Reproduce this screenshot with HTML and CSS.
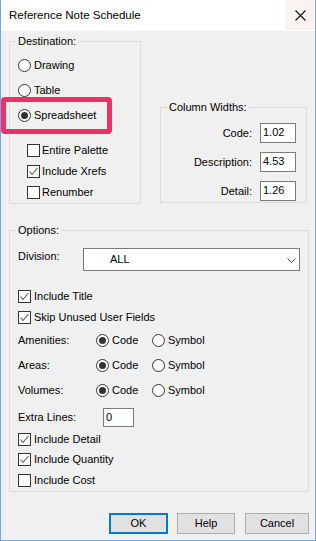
FILE: index.html
```html
<!DOCTYPE html>
<html>
<head>
<meta charset="utf-8">
<title>Reference Note Schedule</title>
<link rel="stylesheet" href="styles.css">
</head>
<body>
<div class="window">
  <div class="titlebar">
    <span class="title">Reference Note Schedule</span>
    <span class="close"><svg width="11" height="11" viewBox="0 0 11 11"><path d="M0.5 0.5 L10.5 10.5 M10.5 0.5 L0.5 10.5" stroke="#111" stroke-width="1.1"/></svg></span>
  </div>
  <div class="client">
    <div class="toprow">
      <fieldset class="group dest">
        <legend>Destination:</legend>
        <div class="radios">
          <div class="opt"><span class="radio"></span>Drawing</div>
          <div class="opt"><span class="radio"></span>Table</div>
          <div class="opt"><span class="radio on"></span>Spreadsheet</div>
        </div>
        <div class="checks">
          <div class="chk"><span class="box"></span>Entire Palette</div>
          <div class="chk"><span class="box on"><svg width="11" height="11" viewBox="0 0 11 11"><path d="M1.5 5.5 L4 8.5 L9.5 2" fill="none" stroke="#555" stroke-width="1.1"/></svg></span>Include Xrefs</div>
          <div class="chk"><span class="box"></span>Renumber</div>
        </div>
      </fieldset>
      <fieldset class="group colw">
        <legend>Column Widths:</legend>
        <div class="cwrow"><span class="cwlabel">Code:</span><span class="field">1.02</span></div>
        <div class="cwrow"><span class="cwlabel">Description:</span><span class="field">4.53</span></div>
        <div class="cwrow"><span class="cwlabel">Detail:</span><span class="field">1.26</span></div>
      </fieldset>
    </div>

    <fieldset class="group options">
      <legend>Options:</legend>
      <div class="division">
        <span class="divlabel">Division:</span>
        <span class="select"><span class="selval">ALL</span><svg class="chev" width="9" height="5" viewBox="0 0 9 5"><path d="M0.5 0.5 L4.5 4.5 L8.5 0.5" fill="none" stroke="#444" stroke-width="1"/></svg></span>
      </div>
      <div class="orow chk2"><span class="box on"><svg width="11" height="11" viewBox="0 0 11 11"><path d="M1.5 5.5 L4 8.5 L9.5 2" fill="none" stroke="#555" stroke-width="1.1"/></svg></span>Include Title</div>
      <div class="orow chk2"><span class="box on"><svg width="11" height="11" viewBox="0 0 11 11"><path d="M1.5 5.5 L4 8.5 L9.5 2" fill="none" stroke="#555" stroke-width="1.1"/></svg></span>Skip Unused User Fields</div>
      <div class="rrow"><span class="rlabel">Amenities:</span><span class="ropt code"><span class="radio on"></span>Code</span><span class="ropt"><span class="radio"></span>Symbol</span></div>
      <div class="rrow"><span class="rlabel">Areas:</span><span class="ropt code"><span class="radio on"></span>Code</span><span class="ropt"><span class="radio"></span>Symbol</span></div>
      <div class="rrow"><span class="rlabel">Volumes:</span><span class="ropt code"><span class="radio on"></span>Code</span><span class="ropt"><span class="radio"></span>Symbol</span></div>
      <div class="extra"><span class="exlabel">Extra Lines:</span><span class="field exfield">0</span></div>
      <div class="orow2 chk2"><span class="box on"><svg width="11" height="11" viewBox="0 0 11 11"><path d="M1.5 5.5 L4 8.5 L9.5 2" fill="none" stroke="#555" stroke-width="1.1"/></svg></span>Include Detail</div>
      <div class="orow2 chk2"><span class="box on"><svg width="11" height="11" viewBox="0 0 11 11"><path d="M1.5 5.5 L4 8.5 L9.5 2" fill="none" stroke="#555" stroke-width="1.1"/></svg></span>Include Quantity</div>
      <div class="orow2 chk2"><span class="box"></span>Include Cost</div>
    </fieldset>

    <div class="buttons">
      <span class="btn default">OK</span>
      <span class="btn help">Help</span>
      <span class="btn cancel">Cancel</span>
    </div>
  </div>
  <div class="highlight"></div>
</div>
</body>
</html>
```

FILE: styles.css
```css
* { box-sizing: border-box; }
html, body { margin: 0; padding: 0; background: #f0f0f0; }
body {
  font-family: "Liberation Sans", Arial, sans-serif;
  font-size: 11px;
  line-height: 13px;
  color: #000;
}
.window {
  position: relative;
  width: 316px;
  height: 541px;
  border: 1px solid #72aae6;
  border-top: none;
  background: #f0f0f0;
  display: flex;
  flex-direction: column;
}
.titlebar {
  height: 31px;
  background: #fff;
  display: flex;
  align-items: stretch;
  justify-content: space-between;
}
.title {
  font-size: 11.5px;
  padding-left: 8px;
  display: flex;
  align-items: center;
  color: #000;
}
.close {
  width: 30px;
  height: 30px;
  background: #fbf3f2;
  display: flex;
  align-items: center;
  justify-content: center;
}
.client {
  flex: 1;
  padding: 4px 6px 0 8px;
  display: flex;
  flex-direction: column;
}
.toprow {
  display: flex;
  align-items: flex-start;
  gap: 19px;
}
.group {
  margin: 0;
  min-width: 0;
  border: 1px solid #dcdcdc;
  padding: 0 0 0 8px;
}
.group legend {
  padding: 0 2px;
  margin-left: -2px;
  line-height: 12px;
  font-size: 11px;
}
.dest {
  width: 132px;
  padding-top: 6px;
}
.opt {
  height: 25px;
  display: flex;
  align-items: center;
}
.radio {
  width: 13px;
  height: 13px;
  border: 1px solid #333;
  border-radius: 50%;
  background: #fff;
  margin-right: 3px;
  display: flex;
  align-items: center;
  justify-content: center;
  flex: none;
}
.radio.on::after {
  content: "";
  width: 7px;
  height: 7px;
  border-radius: 50%;
  background: #333;
}
.checks {
  margin-top: 12px;
  padding-left: 9px;
}
.chk {
  height: 21px;
  display: flex;
  align-items: center;
}
.box {
  width: 13px;
  height: 13px;
  border: 1px solid #333;
  background: #fff;
  margin-right: 2px;
  flex: none;
  display: flex;
  align-items: center;
  justify-content: center;
}
.chk2 .box { margin-right: 3px; }
.colw {
  width: 147px;
  margin-top: 66px;
  padding: 10px 10px 1px 8px;
}
.cwrow {
  display: flex;
  align-items: center;
  height: 20px;
  margin-bottom: 9px;
}
.cwrow:last-child { margin-bottom: 0; }
.cwlabel {
  flex: 1;
  text-align: right;
  margin-right: 8px;
}
.field {
  width: 36px;
  height: 20px;
  border: 1px solid #7a7a7a;
  background: #fff;
  padding-left: 2px;
  line-height: 17px;
}
.options {
  width: 300px;
  margin-top: 20px;
  padding-top: 12px;
  padding-bottom: 0;
}
.division {
  display: flex;
  align-items: flex-start;
  height: 23px;
}
.divlabel {
  width: 65px;
  padding-top: 2px;
}
.select {
  width: 217px;
  height: 23px;
  border: 1px solid #7a7a7a;
  background: #fff;
  display: flex;
  align-items: center;
  justify-content: space-between;
  padding: 0 3px 0 26px;
}
.selval { padding-bottom: 1px; }
.chev { margin-top: 1px; }
.orow {
  height: 21px;
  display: flex;
  align-items: center;
}
.orow:first-of-type { margin-top: 0; }
.division + .orow { margin-top: 15px; }
.rrow {
  height: 25px;
  display: flex;
  align-items: center;
}
.rlabel { width: 78px; }
.ropt { display: flex; align-items: center; }
.ropt.code { width: 56px; }
.extra {
  height: 26px;
  padding-top: 2px;
  display: flex;
  align-items: center;
}
.exlabel { width: 85px; }
.exfield {
  width: 31px;
  height: 19px;
  line-height: 16px;
}
.orow2 {
  height: 20.5px;
  display: flex;
  align-items: center;
}
.buttons {
  margin-top: 21px;
  display: flex;
  justify-content: flex-end;
}
.btn {
  height: 21px;
  background: #e1e1e1;
  border: 1px solid #adadad;
  display: flex;
  align-items: center;
  justify-content: center;
}
.btn.default {
  width: 59px;
  border: 2px solid #0078d7;
  margin-right: 9px;
}
.btn.help { width: 58px; margin-right: 10px; }
.btn.cancel { width: 64px; }
.highlight {
  position: absolute;
  left: 0;
  top: 97px;
  width: 111px;
  height: 37px;
  border: 5px solid #ee3069;
  border-radius: 4px;
}
```
